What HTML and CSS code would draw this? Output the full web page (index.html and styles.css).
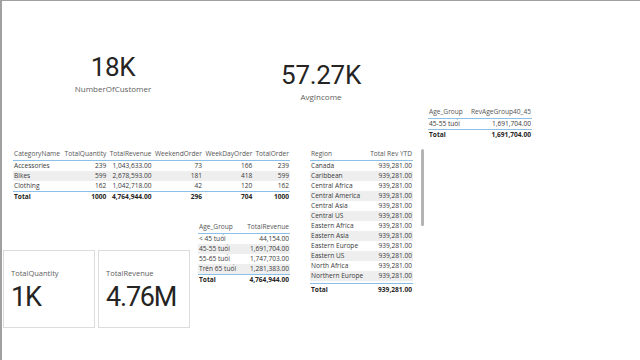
FILE: index.html
```html
<!DOCTYPE html>
<html>
<head>
<meta charset="utf-8">
<link rel="stylesheet" href="styles.css">
</head>
<body>
<div class="canvas">
  <div class="kpi kpi-customers">
    <div class="kpi-value">18K</div>
    <div class="kpi-label">NumberOfCustomer</div>
  </div>
  <div class="kpi kpi-income">
    <div class="kpi-value">57.27K</div>
    <div class="kpi-label">AvgIncome</div>
  </div>

  <div class="visual v-age1">
    <table class="grid">
      <thead><tr><th class="l">Age_Group</th><th class="r">RevAgeGroup40_45</th></tr></thead>
      <tbody><tr><td class="l">45-55 tuổi</td><td class="r">1,691,704.00</td></tr></tbody>
      <tfoot><tr><td class="l">Total</td><td class="r">1,691,704.00</td></tr></tfoot>
    </table>
  </div>

  <div class="visual v-cat">
    <table class="grid">
      <thead><tr>
        <th class="l c1">CategoryName</th><th class="r c2">TotalQuantity</th><th class="r c3">TotalRevenue</th>
        <th class="r c4">WeekendOrder</th><th class="r c5">WeekDayOrder</th><th class="r c6">TotalOrder</th>
      </tr></thead>
      <tbody>
        <tr><td class="l">Accessories</td><td class="r">239</td><td class="r">1,043,633.00</td><td class="r">73</td><td class="r">166</td><td class="r">239</td></tr>
        <tr class="alt"><td class="l">Bikes</td><td class="r">599</td><td class="r">2,678,593.00</td><td class="r">181</td><td class="r">418</td><td class="r">599</td></tr>
        <tr><td class="l">Clothing</td><td class="r">162</td><td class="r">1,042,718.00</td><td class="r">42</td><td class="r">120</td><td class="r">162</td></tr>
      </tbody>
      <tfoot><tr><td class="l">Total</td><td class="r">1000</td><td class="r">4,764,944.00</td><td class="r">296</td><td class="r">704</td><td class="r">1000</td></tr></tfoot>
    </table>
  </div>

  <div class="visual v-age2">
    <table class="grid">
      <thead><tr><th class="l">Age_Group</th><th class="r">TotalRevenue</th></tr></thead>
      <tbody>
        <tr><td class="l">&lt; 45 tuổi</td><td class="r">44,154.00</td></tr>
        <tr class="alt"><td class="l">45-55 tuổi</td><td class="r">1,691,704.00</td></tr>
        <tr><td class="l">55-65 tuổi</td><td class="r">1,747,703.00</td></tr>
        <tr class="alt"><td class="l">Trên 65 tuổi</td><td class="r">1,281,383.00</td></tr>
      </tbody>
      <tfoot><tr><td class="l">Total</td><td class="r">4,764,944.00</td></tr></tfoot>
    </table>
  </div>

  <div class="visual v-region">
    <table class="grid">
      <thead><tr><th class="l">Region</th><th class="r">Total Rev YTD</th></tr></thead>
      <tbody>
        <tr><td class="l">Canada</td><td class="r">939,281.00</td></tr>
        <tr class="alt"><td class="l">Caribbean</td><td class="r">939,281.00</td></tr>
        <tr><td class="l">Central Africa</td><td class="r">939,281.00</td></tr>
        <tr class="alt"><td class="l">Central America</td><td class="r">939,281.00</td></tr>
        <tr><td class="l">Central Asia</td><td class="r">939,281.00</td></tr>
        <tr class="alt"><td class="l">Central US</td><td class="r">939,281.00</td></tr>
        <tr><td class="l">Eastern Africa</td><td class="r">939,281.00</td></tr>
        <tr class="alt"><td class="l">Eastern Asia</td><td class="r">939,281.00</td></tr>
        <tr><td class="l">Eastern Europe</td><td class="r">939,281.00</td></tr>
        <tr class="alt"><td class="l">Eastern US</td><td class="r">939,281.00</td></tr>
        <tr><td class="l">North Africa</td><td class="r">939,281.00</td></tr>
        <tr class="alt"><td class="l">Northern Europe</td><td class="r">939,281.00</td></tr>
        <tr class="gap"><td colspan="2"></td></tr>
      </tbody>
      <tfoot><tr class="tall"><td class="l">Total</td><td class="r">939,281.00</td></tr></tfoot>
    </table>
    <div class="scrollbar"></div>
  </div>

  <div class="card card-qty">
    <div class="card-label">TotalQuantity</div>
    <div class="card-value">1K</div>
  </div>
  <div class="card card-rev">
    <div class="card-label">TotalRevenue</div>
    <div class="card-value">4.76M</div>
  </div>
</div>
</body>
</html>
```
FILE: styles.css
```css
* { box-sizing: border-box; }
html, body {
  margin: 0;
  padding: 0;
  background: #ffffff;
}
body {
  font-family: "Open Sans", "Noto Sans", sans-serif;
  color: #252423;
}
.canvas {
  position: relative;
  width: 640px;
  height: 360px;
  border-top: 1px solid #a0a0a0;
  border-left: 2px solid #a0a0a0;
  overflow: hidden;
}

/* KPI numbers */
.kpi {
  position: absolute;
  display: flex;
  flex-direction: column;
  align-items: center;
}
.kpi-value {
  font-family: "Roboto", "Open Sans", sans-serif;
  font-size: 26px;
  line-height: 26px;
  letter-spacing: -0.3px;
  color: #252423;
}
.kpi-label {
  font-size: 8px;
  line-height: 10px;
  color: #605e5c;
  margin-top: 4px;
}
.kpi-customers { left: 51px; top: 53px; width: 120px; }
.kpi-income { left: 259px; top: 61px; width: 120px; }

/* Tables */
.visual { position: absolute; }
.grid {
  border-collapse: collapse;
  width: 100%;
  font-size: 6.6px;
  color: #3a3a3a;
}
.grid th, .grid td {
  padding: 0 1px;
  white-space: nowrap;
  height: 10px;
  line-height: 10px;
}
.grid th {
  font-weight: 400;
  color: #555555;
  height: 12px;
  vertical-align: middle;
  border-bottom: 1.5px solid #8cc0e8;
}
.grid .l { text-align: left; }
.grid .r { text-align: right; }
.grid tr.alt td { background: #eeeeee; }
.grid tfoot td {
  font-weight: 700;
  color: #252423;
  border-top: 1.5px solid #8cc0e8;
  height: 11px;
}
.grid tfoot tr.tall td { height: 13px; }

.v-age1 { left: 426px; top: 105px; width: 104px; }
.v-cat { left: 11px; top: 147px; width: 277px; }
.v-age2 { left: 196px; top: 220px; width: 92px; }
.v-region { left: 308px; top: 147px; width: 116px; }
.v-region .grid { width: 103px; }
.v-region tr.gap td { height: 3px; line-height: 3px; background: #fff; }
.scrollbar {
  position: absolute;
  left: 111px;
  top: 1px;
  width: 3px;
  height: 77px;
  border-radius: 2px;
  background: #b4b4b4;
}

/* Cards */
.card {
  position: absolute;
  top: 249px;
  width: 92px;
  height: 78px;
  border: 1px solid #dcdcdc;
  display: flex;
  flex-direction: column;
  padding: 17px 0 0 7px;
}
.card-qty { left: 1px; }
.card-rev { left: 96px; }
.card-label {
  font-size: 7.5px;
  line-height: 10px;
  color: #605e5c;
}
.card-value {
  font-family: "Roboto", "Open Sans", sans-serif;
  font-size: 27px;
  line-height: 30px;
  letter-spacing: -1.2px;
  color: #252423;
  margin-top: 4px;
}
```
